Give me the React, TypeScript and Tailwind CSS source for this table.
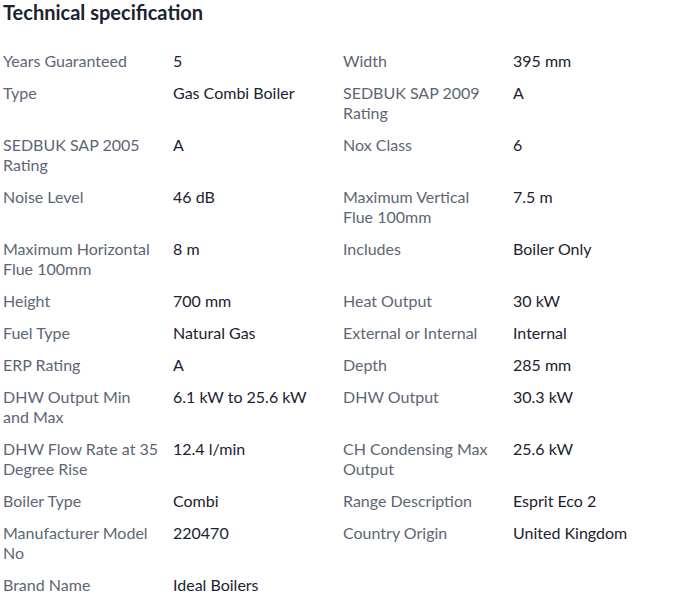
const rows: [string, string, string, string][] = [
  ['Years Guaranteed', '5', 'Width', '395 mm'],
  ['Type', 'Gas Combi Boiler', 'SEDBUK SAP 2009 Rating', 'A'],
  ['SEDBUK SAP 2005 Rating', 'A', 'Nox Class', '6'],
  ['Noise Level', '46 dB', 'Maximum Vertical Flue 100mm', '7.5 m'],
  ['Maximum Horizontal Flue 100mm', '8 m', 'Includes', 'Boiler Only'],
  ['Height', '700 mm', 'Heat Output', '30 kW'],
  ['Fuel Type', 'Natural Gas', 'External or Internal', 'Internal'],
  ['ERP Rating', 'A', 'Depth', '285 mm'],
  ['DHW Output Min and Max', '6.1 kW to 25.6 kW', 'DHW Output', '30.3 kW'],
  ['DHW Flow Rate at 35 Degree Rise', '12.4 l/min', 'CH Condensing Max Output', '25.6 kW'],
  ['Boiler Type', 'Combi', 'Range Description', 'Esprit Eco 2'],
  ['Manufacturer Model No', '220470', 'Country Origin', 'United Kingdom'],
  ['Brand Name', 'Ideal Boilers', '', ''],
];

export default function App() {
  return (
    <div className="min-h-screen bg-white pl-[3px] font-['Lato',sans-serif]">
      <h2 className="text-[20px] leading-[24px] font-bold text-[#1b2230]">Technical specification</h2>
      <div className="mt-[27px] grid grid-cols-[170px_170px_170px_170px]">
        {rows.map((r, i) => (
          <div key={i} className="contents">
            <div className="pr-[14px] pb-[12px] text-[16px] leading-[20px] text-[#5d6675]">{r[0]}</div>
            <div className="pr-[14px] pb-[12px] text-[16px] leading-[20px] text-[#1c2230]">{r[1]}</div>
            <div className="pr-[14px] pb-[12px] text-[16px] leading-[20px] text-[#5d6675]">{r[2]}</div>
            <div className="pr-[14px] pb-[12px] text-[16px] leading-[20px] text-[#1c2230]">{r[3]}</div>
          </div>
        ))}
      </div>
    </div>
  );
}
